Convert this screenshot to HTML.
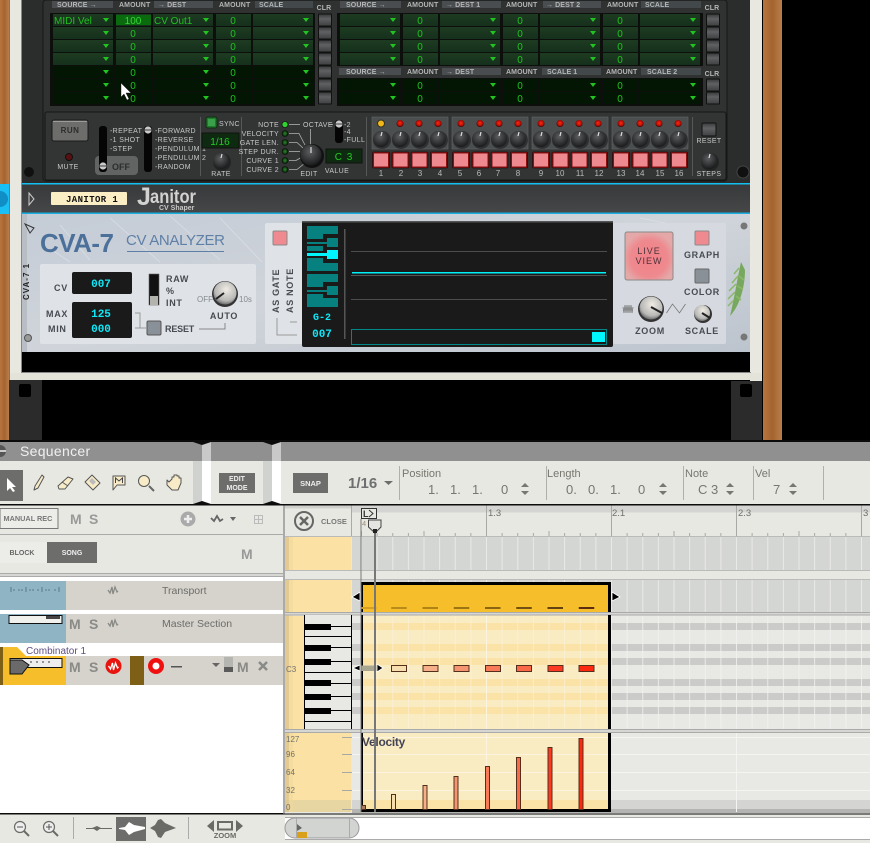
<!DOCTYPE html>
<html>
<head>
<meta charset="utf-8">
<style>
html,body{margin:0;padding:0;background:#000;width:870px;height:843px;overflow:hidden}
svg{display:block;font-family:"Liberation Sans",sans-serif}
.l{font-size:7px;font-weight:bold;fill:#b4b6b6;letter-spacing:.1px}
.n{font-size:10px;fill:#1fc41f;text-anchor:middle}
.g{font-size:10px;fill:#20c020}
.c{text-anchor:middle}
.d{font-size:9px;font-weight:bold;fill:#474c52;letter-spacing:.7px}
.sq{font-size:11px;fill:#77776f}
.num{font-size:13px;fill:#77776f}
.M{font-size:14px;font-weight:bold;fill:#8c8c88}
.s{font-size:7px;fill:#c6c8c8;letter-spacing:.35px}
</style>
</head>
<body>
<svg width="870" height="843" viewBox="0 0 870 843" xmlns="http://www.w3.org/2000/svg">
<defs>
<linearGradient id="wood" x1="0" x2="1" y1="0" y2="0"><stop offset="0" stop-color="#b8743f"/><stop offset=".5" stop-color="#a4642f"/><stop offset="1" stop-color="#b97e4c"/></linearGradient>
<linearGradient id="btn" x1="0" x2="0" y1="0" y2="1"><stop offset="0" stop-color="#3a3c3d"/><stop offset=".4" stop-color="#5f6163"/><stop offset="1" stop-color="#3f4142"/></linearGradient>
<radialGradient id="kn" cx=".45" cy=".35" r=".75"><stop offset="0" stop-color="#5c5e60"/><stop offset=".8" stop-color="#1f2021"/><stop offset="1" stop-color="#0b0b0b"/></radialGradient>
<radialGradient id="kw" cx=".55" cy=".35" r=".7"><stop offset="0" stop-color="#f0ece4"/><stop offset=".7" stop-color="#b8b8b6"/><stop offset="1" stop-color="#56565a"/></radialGradient>
<radialGradient id="led" cx=".5" cy=".45" r=".55"><stop offset="0" stop-color="#ff2a10"/><stop offset=".7" stop-color="#b00c04"/><stop offset="1" stop-color="#200"/></radialGradient>
<radialGradient id="gled" cx=".5" cy=".5" r=".55"><stop offset="0" stop-color="#2a8a2a"/><stop offset="1" stop-color="#071a07"/></radialGradient>
<radialGradient id="live" cx=".5" cy=".55" r=".55"><stop offset="0" stop-color="#f28088"/><stop offset=".7" stop-color="#ee8a8f"/><stop offset="1" stop-color="#e4a8a8"/></radialGradient>
<linearGradient id="fold" x1="0" x2="0" y1="0" y2="1"><stop offset="0" stop-color="#38393a"/><stop offset="1" stop-color="#464748"/></linearGradient>
<linearGradient id="cva" x1="0" x2="1" y1="0" y2="1"><stop offset="0" stop-color="#c4ccd6"/><stop offset=".5" stop-color="#d0d4da"/><stop offset="1" stop-color="#bcc4ce"/></linearGradient>
<linearGradient id="rowhi" x1="0" x2="0" y1="0" y2="1"><stop offset="0" stop-color="#1e3c22"/><stop offset="1" stop-color="#15301c"/></linearGradient>
<pattern id="rowsA" patternUnits="userSpaceOnUse" width="10" height="13" y="14"><rect width="10" height="12" fill="url(#rowhi)"/></pattern>
<pattern id="rowsB" patternUnits="userSpaceOnUse" width="10" height="13" y="14"><rect width="10" height="12" fill="#031503"/></pattern>
<pattern id="v16" patternUnits="userSpaceOnUse" width="15.625" height="10" x="361"><rect width="1" height="10" fill="#f2f2f0"/></pattern>
<pattern id="v16y" patternUnits="userSpaceOnUse" width="15.625" height="10" x="361"><rect width="1" height="10" fill="#fbf2d8"/></pattern>
<pattern id="ticks" patternUnits="userSpaceOnUse" width="15.625" height="10" x="361"><rect width="1" height="10" fill="#a8a8a4"/></pattern>
<pattern id="ticksM" patternUnits="userSpaceOnUse" width="62.5" height="10" x="361"><rect width="1" height="10" fill="#a8a8a4"/></pattern>
<polygon id="tri" points="-3,-2 3,-2 0,2" fill="#22c422"/>
<g id="clr"><rect x="-7" y="-6.500" width="14" height="13" rx="1" fill="#111"/><rect x="-6" y="-5.500" width="12" height="11" fill="url(#btn)"/></g>
<g id="k"><circle r="9" fill="#111" opacity=".5" cx="1" cy="1"/><circle r="8" fill="url(#kn)"/><line x1="1" y1="-7" x2="0" y2="-3" stroke="#ddd" stroke-width="1.2"/></g>
<g id="rled"><circle r="3.5" fill="url(#led)"/></g>
<g id="pad"><rect width="17" height="16" rx="1" fill="#8c0f10" stroke="#1a0505" stroke-width=".6"/><rect x="1.5" y="1.5" width="14" height="13" fill="#ee8990"/></g>
<g id="gl"><circle r="3" fill="url(#gled)" stroke="#0a0d0a" stroke-width=".6"/></g>
<g id="slotk"><circle r="3.6" fill="#c9c9c9"/><rect x="-3.6" y="-.6" width="7.2" height="1.2" fill="#555"/></g>
<g id="sp"><polygon points="-4,-2 0,-6 4,-2" fill="#77776f"/><polygon points="-4,2 0,6 4,2" fill="#77776f"/></g>
</defs>

<!-- background -->
<rect width="870" height="843" fill="#000"/>
<rect x="0" y="0" width="9" height="440" fill="url(#wood)"/>
<rect x="763" y="0" width="19" height="440" fill="url(#wood)"/>
<rect x="9" y="0" width="1" height="381" fill="#777"/>
<rect x="10" y="0" width="11" height="381" fill="#e9e8e0"/>
<rect x="750" y="0" width="12" height="381" fill="#e9e8e0"/>
<rect x="21" y="0" width="1" height="373" fill="#888"/>
<rect x="10" y="373" width="752" height="7" fill="#e4e3da"/>
<rect x="21" y="372" width="730" height="1" fill="#888"/>
<rect x="9" y="380" width="33" height="60" fill="#2b2b2b"/>
<rect x="19" y="384" width="12" height="13" rx="2" fill="#000"/>
<rect x="731" y="381" width="31" height="59" fill="#2b2b2b"/>
<rect x="740" y="384" width="12" height="13" rx="2" fill="#000"/>
<rect x="0" y="184" width="9" height="30" fill="#19bff5"/>
<circle cx="0" cy="199" r="8" fill="#108fc6"/>

<!-- Redrum-like device -->
<rect x="22" y="0" width="728" height="184" fill="#2b2d2d"/>
<rect x="43" y="0" width="684" height="181" rx="3" fill="#303232" stroke="#161717"/>
<circle cx="29" cy="172" r="5" fill="#101010"/><circle cx="743" cy="172" r="6" fill="#101010" stroke="#444"/>

<!-- headers left -->
<rect x="52" y="1" width="61" height="7" fill="#4a4d4f"/>
<rect x="154" y="1" width="59" height="7" fill="#4a4d4f"/>
<rect x="255" y="1" width="58" height="7" fill="#43494a"/>
<text class="l" x="57" y="7">SOURCE →</text>
<text class="l" x="119" y="7">AMOUNT</text>
<text class="l" x="158" y="7">→ DEST</text>
<text class="l" x="219" y="7">AMOUNT</text>
<text class="l" x="259" y="7">SCALE</text>
<text class="l c" x="324" y="10">CLR</text>

<!-- table left -->
<rect x="50" y="13" width="265" height="93" fill="#0d0f0d"/>
<g fill="url(#rowsA)">
<rect x="53" y="14" width="60" height="52"/><rect x="116" y="14" width="35" height="52"/><rect x="153" y="14" width="60" height="52"/><rect x="216" y="14" width="35" height="52"/><rect x="253" y="14" width="60" height="52"/>
</g>
<g fill="url(#rowsB)">
<rect x="53" y="66" width="60" height="39"/><rect x="116" y="66" width="35" height="39"/><rect x="153" y="66" width="60" height="39"/><rect x="216" y="66" width="35" height="39"/><rect x="253" y="66" width="60" height="39"/>
</g>
<rect x="116" y="15" width="35" height="10" fill="#0a6a0e"/>
<text class="g" x="54" y="24">MIDI Vel</text>
<text class="g" x="154" y="24">CV Out1</text>
<text class="n" x="133" y="24" style="fill:#39d339">100</text>
<text class="n" x="133" y="37">0</text><text class="n" x="133" y="50">0</text><text class="n" x="133" y="63">0</text><text class="n" x="133" y="76">0</text><text class="n" x="133" y="89">0</text><text class="n" x="133" y="102">0</text>
<text class="n" x="233" y="24">0</text><text class="n" x="233" y="37">0</text><text class="n" x="233" y="50">0</text><text class="n" x="233" y="63">0</text><text class="n" x="233" y="76">0</text><text class="n" x="233" y="89">0</text><text class="n" x="233" y="102">0</text>
<g>
<use href="#tri" x="106" y="20"/><use href="#tri" x="106" y="33"/><use href="#tri" x="106" y="46"/><use href="#tri" x="106" y="59"/><use href="#tri" x="106" y="72"/><use href="#tri" x="106" y="85"/><use href="#tri" x="106" y="98"/>
<use href="#tri" x="206" y="20"/><use href="#tri" x="206" y="33"/><use href="#tri" x="206" y="46"/><use href="#tri" x="206" y="59"/><use href="#tri" x="206" y="72"/><use href="#tri" x="206" y="85"/><use href="#tri" x="206" y="98"/>
<use href="#tri" x="306" y="20"/><use href="#tri" x="306" y="33"/><use href="#tri" x="306" y="46"/><use href="#tri" x="306" y="59"/><use href="#tri" x="306" y="72"/><use href="#tri" x="306" y="85"/><use href="#tri" x="306" y="98"/>
</g>
<use href="#clr" x="325" y="20"/><use href="#clr" x="325" y="33"/><use href="#clr" x="325" y="46"/><use href="#clr" x="325" y="59"/><use href="#clr" x="325" y="72"/><use href="#clr" x="325" y="85"/><use href="#clr" x="325" y="98"/>

<!-- headers right -->
<rect x="340" y="1" width="61" height="7" fill="#4a4d4f"/>
<rect x="442" y="1" width="59" height="7" fill="#4a4d4f"/>
<rect x="543" y="1" width="58" height="7" fill="#4a4d4f"/>
<rect x="641" y="1" width="60" height="7" fill="#43494a"/>
<text class="l" x="346" y="7">SOURCE →</text>
<text class="l" x="407" y="7">AMOUNT</text>
<text class="l" x="446" y="7">→ DEST 1</text>
<text class="l" x="506" y="7">AMOUNT</text>
<text class="l" x="546" y="7">→ DEST 2</text>
<text class="l" x="607" y="7">AMOUNT</text>
<text class="l" x="645" y="7">SCALE</text>
<text class="l c" x="712" y="10">CLR</text>
<rect x="339" y="68" width="62" height="7" fill="#4a4d4f"/>
<rect x="442" y="68" width="59" height="7" fill="#4a4d4f"/>
<rect x="542" y="68" width="59" height="7" fill="#43494a"/>
<rect x="641" y="68" width="60" height="7" fill="#43494a"/>
<text class="l" x="346" y="74">SOURCE →</text>
<text class="l" x="407" y="74">AMOUNT</text>
<text class="l" x="446" y="74">→ DEST</text>
<text class="l" x="506" y="74">AMOUNT</text>
<text class="l" x="547" y="74">SCALE 1</text>
<text class="l" x="606" y="74">AMOUNT</text>
<text class="l" x="647" y="74">SCALE 2</text>
<text class="l c" x="712" y="76">CLR</text>

<!-- tables right -->
<rect x="337" y="13" width="366" height="53" fill="#0d0f0d"/>
<rect x="337" y="78" width="366" height="28" fill="#0d0f0d"/>
<g fill="url(#rowsA)">
<rect x="340" y="14" width="60" height="52"/><rect x="403" y="14" width="35" height="52"/><rect x="440" y="14" width="60" height="52"/><rect x="503" y="14" width="35" height="52"/><rect x="540" y="14" width="60" height="52"/><rect x="603" y="14" width="35" height="52"/><rect x="640" y="14" width="60" height="52"/>
</g>
<g fill="url(#rowsB)">
<rect x="340" y="79" width="60" height="26"/><rect x="403" y="79" width="35" height="26"/><rect x="440" y="79" width="60" height="26"/><rect x="503" y="79" width="35" height="26"/><rect x="540" y="79" width="60" height="26"/><rect x="603" y="79" width="35" height="26"/><rect x="640" y="79" width="60" height="26"/>
</g>
<text class="n" x="420" y="24">0</text><text class="n" x="420" y="37">0</text><text class="n" x="420" y="50">0</text><text class="n" x="420" y="63">0</text><text class="n" x="420" y="89">0</text><text class="n" x="420" y="102">0</text>
<text class="n" x="520" y="24">0</text><text class="n" x="520" y="37">0</text><text class="n" x="520" y="50">0</text><text class="n" x="520" y="63">0</text><text class="n" x="520" y="89">0</text><text class="n" x="520" y="102">0</text>
<text class="n" x="620" y="24">0</text><text class="n" x="620" y="37">0</text><text class="n" x="620" y="50">0</text><text class="n" x="620" y="63">0</text><text class="n" x="620" y="89">0</text><text class="n" x="620" y="102">0</text>
<use href="#tri" x="393" y="20"/><use href="#tri" x="393" y="33"/><use href="#tri" x="393" y="46"/><use href="#tri" x="393" y="59"/><use href="#tri" x="393" y="85"/><use href="#tri" x="393" y="98"/>
<use href="#tri" x="493" y="20"/><use href="#tri" x="493" y="33"/><use href="#tri" x="493" y="46"/><use href="#tri" x="493" y="59"/><use href="#tri" x="493" y="85"/><use href="#tri" x="493" y="98"/>
<use href="#tri" x="593" y="20"/><use href="#tri" x="593" y="33"/><use href="#tri" x="593" y="46"/><use href="#tri" x="593" y="59"/><use href="#tri" x="593" y="85"/><use href="#tri" x="593" y="98"/>
<use href="#tri" x="693" y="20"/><use href="#tri" x="693" y="33"/><use href="#tri" x="693" y="46"/><use href="#tri" x="693" y="59"/><use href="#tri" x="693" y="85"/><use href="#tri" x="693" y="98"/>
<use href="#clr" x="713" y="20"/><use href="#clr" x="713" y="33"/><use href="#clr" x="713" y="46"/><use href="#clr" x="713" y="59"/><use href="#clr" x="713" y="85"/><use href="#clr" x="713" y="98"/>

<!-- cursor -->
<polygon points="121,83 121,97 124,94 127,100 129,99 126,93 131,93" fill="#fff" stroke="#111" stroke-width=".4"/>

<!-- lower panel -->
<rect x="45" y="112" width="681" height="68" rx="2" fill="#333535" stroke="#151616"/>
<rect x="52" y="120" width="36" height="21" rx="2" fill="#6d6d6b" stroke="#1a1a1a"/>
<rect x="53" y="121" width="34" height="1" fill="#9c9c9a"/>
<text x="70" y="133" class="c" style="font-size:8px;font-weight:bold;fill:#2d2d2d;letter-spacing:.5px">RUN</text>
<circle cx="69" cy="157" r="3.5" fill="#5a1010" stroke="#111"/>
<text class="s c" x="68" y="169">MUTE</text>
<rect x="95" y="156" width="43" height="19" rx="4" fill="#626363"/>
<rect x="99" y="126" width="8" height="46" rx="3" fill="#050505"/>
<use href="#slotk" x="103" y="166"/>
<text style="font-size:9px;font-weight:bold;fill:#2c2e2e" x="112" y="170">OFF</text>
<text class="s" x="110" y="133">-REPEAT</text>
<text class="s" x="110" y="142">-1 SHOT</text>
<text class="s" x="110" y="151">-STEP</text>
<rect x="144" y="126" width="8" height="46" rx="3" fill="#050505"/>
<use href="#slotk" x="148" y="130"/>
<text class="s" x="155" y="133">-FORWARD</text>
<text class="s" x="155" y="142">-REVERSE</text>
<text class="s" x="155" y="151">-PENDULUM 1</text>
<text class="s" x="155" y="160">-PENDULUM 2</text>
<text class="s" x="155" y="169">-RANDOM</text>
<rect x="200" y="117" width="1" height="59" fill="#565858"/>
<rect x="241" y="117" width="1" height="59" fill="#565858"/>
<rect x="366" y="117" width="1" height="59" fill="#565858"/>
<rect x="692" y="117" width="1" height="59" fill="#565858"/>
<rect x="206" y="117" width="11" height="11" rx="2" fill="#1f7a2c" stroke="#0f2a12"/>
<rect x="208" y="119" width="7" height="7" fill="#3aa04a"/>
<text class="s" x="219" y="126">SYNC</text>
<rect x="202" y="133" width="37" height="15" fill="#0e2a10" stroke="#111"/>
<text x="220" y="145" class="c" style="font-size:10px;fill:#24cc24">1/16</text>
<use href="#k" x="221" y="161"/>
<text class="s c" x="221" y="176">RATE</text>
<g text-anchor="end">
<text class="s" x="279" y="127">NOTE</text><text class="s" x="279" y="136">VELOCITY</text><text class="s" x="279" y="145">GATE LEN.</text><text class="s" x="279" y="154">STEP DUR.</text><text class="s" x="279" y="163">CURVE 1</text><text class="s" x="279" y="172">CURVE 2</text>
</g>
<circle cx="285" cy="124.5" r="3" fill="#30d030" stroke="#0a0d0a" stroke-width=".6"/>
<use href="#gl" x="285" y="133.5"/><use href="#gl" x="285" y="142.5"/><use href="#gl" x="285" y="151.5"/><use href="#gl" x="285" y="160.5"/><use href="#gl" x="285" y="169.5"/>
<g stroke="#b0b2b2" fill="none" stroke-width=".8">
<path d="M289 124.5H300"/><path d="M289 133.5H299L305 145"/><path d="M289 142.5H297L303 148"/><path d="M289 151.5H300"/><path d="M289 160.5H296L302 157"/><path d="M289 169.5H297L305 163"/>
<path d="M329 124.5H333"/><path d="M310.500 129V147"/>
</g>
<text class="s" x="303" y="127">OCTAVE</text>
<circle cx="312" cy="156" r="12" fill="#111"/><circle cx="311" cy="155" r="10.500" fill="url(#kn)"/><line x1="311" y1="147" x2="311" y2="153" stroke="#ddd" stroke-width="1.2"/>
<text class="s c" x="309" y="176">EDIT</text>
<rect x="335" y="120" width="8" height="23" rx="3" fill="#050505"/><use href="#slotk" x="339" y="124"/>
<text class="s" x="344" y="127">-2</text><text class="s" x="344" y="134">-4</text><text class="s" x="344" y="142">-FULL</text>
<rect x="326" y="149" width="36" height="14" fill="#0e2a10" stroke="#111"/>
<text x="344" y="160" class="c" style="font-size:10px;fill:#24cc24;letter-spacing:1px">C 3</text>
<text class="s c" x="337" y="173">VALUE</text>

<!-- step groups -->
<rect x="372" y="117" width="76" height="32" fill="#4c4f50" stroke="#636566" stroke-width=".6"/>
<rect x="452" y="117" width="76" height="32" fill="#4c4f50" stroke="#636566" stroke-width=".6"/>
<rect x="532" y="117" width="76" height="32" fill="#4c4f50" stroke="#636566" stroke-width=".6"/>
<rect x="612" y="117" width="76" height="32" fill="#4c4f50" stroke="#636566" stroke-width=".6"/>
<circle cx="381" cy="123.500" r="3.500" fill="#f2b818" stroke="#332"/>
<use href="#rled" x="400" y="123.500"/><use href="#rled" x="419" y="123.500"/><use href="#rled" x="438" y="123.500"/>
<use href="#rled" x="461" y="123.500"/><use href="#rled" x="480" y="123.500"/><use href="#rled" x="499" y="123.500"/><use href="#rled" x="518" y="123.500"/>
<use href="#rled" x="541" y="123.500"/><use href="#rled" x="560" y="123.500"/><use href="#rled" x="579" y="123.500"/><use href="#rled" x="598" y="123.500"/>
<use href="#rled" x="621" y="123.500"/><use href="#rled" x="640" y="123.500"/><use href="#rled" x="659" y="123.500"/><use href="#rled" x="678" y="123.500"/>
<use href="#k" x="381" y="139"/><use href="#k" x="400" y="139"/><use href="#k" x="419" y="139"/><use href="#k" x="438" y="139"/>
<use href="#k" x="461" y="139"/><use href="#k" x="480" y="139"/><use href="#k" x="499" y="139"/><use href="#k" x="518" y="139"/>
<use href="#k" x="541" y="139"/><use href="#k" x="560" y="139"/><use href="#k" x="579" y="139"/><use href="#k" x="598" y="139"/>
<use href="#k" x="621" y="139"/><use href="#k" x="640" y="139"/><use href="#k" x="659" y="139"/><use href="#k" x="678" y="139"/>
<use href="#pad" x="372.500" y="152"/><use href="#pad" x="392" y="152"/><use href="#pad" x="411" y="152"/><use href="#pad" x="430.500" y="152"/>
<use href="#pad" x="452.500" y="152"/><use href="#pad" x="472" y="152"/><use href="#pad" x="491" y="152"/><use href="#pad" x="510.500" y="152"/>
<use href="#pad" x="532.500" y="152"/><use href="#pad" x="552" y="152"/><use href="#pad" x="571" y="152"/><use href="#pad" x="590.500" y="152"/>
<use href="#pad" x="612.500" y="152"/><use href="#pad" x="632" y="152"/><use href="#pad" x="651" y="152"/><use href="#pad" x="670.500" y="152"/>
<g style="font-size:8px" fill="#b8baba" text-anchor="middle">
<text x="381" y="176">1</text><text x="401" y="176">2</text><text x="420" y="176">3</text><text x="440" y="176">4</text><text x="460" y="176">5</text><text x="479" y="176">6</text><text x="498" y="176">7</text><text x="518" y="176">8</text><text x="541" y="176">9</text><text x="560" y="176">10</text><text x="580" y="176">11</text><text x="599" y="176">12</text><text x="621" y="176">13</text><text x="640" y="176">14</text><text x="660" y="176">15</text><text x="679" y="176">16</text>
</g>
<rect x="702" y="123" width="14" height="13" rx="1" fill="url(#btn)" stroke="#111"/>
<text class="s c" x="709" y="143">RESET</text>
<use href="#k" x="709" y="161"/>
<text class="s c" x="709" y="176">STEPS</text>

<!-- folded Janitor -->
<rect x="22" y="183" width="728" height="1.500" fill="#12bff0"/>
<rect x="22" y="184.500" width="728" height="28.500" fill="url(#fold)"/>
<rect x="22" y="212.500" width="728" height="1.500" fill="#18aee0"/>
<polygon points="29,193 34,199 29,205" fill="none" stroke="#ccc"/>
<rect x="51" y="192" width="76" height="13" rx="1" fill="#fbeec4"/>
<text x="66" y="202" style="font-family:'Liberation Mono',monospace;font-size:9px;font-weight:bold;fill:#111;letter-spacing:.4px">JANITOR 1</text>
<text x="137" y="205" style="font-size:25px;font-weight:bold;fill:#d2d2d0">J</text>
<text x="150" y="203" style="font-size:19px;font-weight:bold;fill:#d2d2d0" textLength="46" lengthAdjust="spacingAndGlyphs">anitor</text>
<text x="159" y="210" style="font-size:7px;font-weight:bold;fill:#c8c8c6">CV Shaper</text>

<!-- CVA-7 -->
<rect x="22" y="214" width="728" height="138" fill="url(#cva)"/>
<g stroke="#e6e9ee" stroke-width=".8" opacity=".6">
<path d="M60 225L90 260M110 218L160 262M170 216L220 260M220 218L262 262M640 218L680 226M52 250L70 262"/>
</g>
<rect x="22" y="214" width="5" height="138" fill="#b8bec4"/>
<polygon points="25,224 34,228 30,233" fill="none" stroke="#333"/>
<text transform="translate(29,300) rotate(-90)" style="font-size:8px;font-weight:bold;fill:#222;letter-spacing:1px">CVA-7 1</text>
<text x="40" y="252" style="font-size:26px;font-weight:bold;fill:#4b7099" textLength="74">CVA-7</text>
<text x="126" y="245" style="font-size:15px;fill:#5f80a6" textLength="99">CV ANALYZER</text>
<rect x="127" y="251" width="97" height="1" fill="#5f80a6"/>
<rect x="40" y="264" width="216" height="80" rx="2" fill="#dfe2e7"/>
<text class="d c" x="61" y="291">CV</text>
<rect x="72" y="272" width="60" height="22" rx="2" fill="#1a1a1a"/>
<text x="101" y="287" class="c" style="font-family:'Liberation Mono',monospace;font-size:11px;font-weight:bold;fill:#10e8f8">007</text>
<text class="d" x="46" y="317">MAX</text><text class="d" x="48" y="332">MIN</text>
<rect x="72" y="302" width="60" height="36" rx="2" fill="#1a1a1a"/>
<text x="101" y="317" class="c" style="font-family:'Liberation Mono',monospace;font-size:11px;font-weight:bold;fill:#10e8f8">125</text>
<text x="101" y="332" class="c" style="font-family:'Liberation Mono',monospace;font-size:11px;font-weight:bold;fill:#10e8f8">000</text>
<path d="M135 313H140V328M135 328H146" stroke="#999" fill="none"/>
<rect x="147" y="321" width="14" height="14" rx="1.500" fill="#8a9098" stroke="#555"/>
<text class="d" x="165" y="332" textLength="30">RESET</text>
<path d="M199 329H225V323" stroke="#888" fill="none"/>
<rect x="149" y="274" width="10" height="31" fill="#111" stroke="#666" stroke-width=".6"/>
<rect x="150" y="296" width="8" height="9" fill="#b4b4ae"/>
<text class="d" x="166" y="282">RAW</text><text class="d" x="166" y="294">%</text><text class="d" x="166" y="306">INT</text>
<circle cx="225" cy="294" r="13" fill="#333"/><circle cx="225" cy="293" r="11.500" fill="url(#kw)"/>
<line x1="224" y1="293" x2="216" y2="299" stroke="#222" stroke-width="2"/>
<text x="197" y="302" style="font-size:8px;fill:#858b92">OFF</text><text x="239" y="302" style="font-size:8px;fill:#858b92">10s</text>
<text class="d c" x="224" y="319">AUTO</text>

<rect x="265" y="223" width="40" height="121" rx="2" fill="#dfe2e7"/>
<rect x="273" y="231" width="14" height="14" rx="1" fill="#ee8a90" stroke="#8a8a8a"/>
<text transform="translate(279,313) rotate(-90)" class="d">AS GATE</text>
<text transform="translate(293,313) rotate(-90)" class="d">AS NOTE</text>
<path d="M277 318V335H297M290 322H297" stroke="#999" fill="none"/>

<rect x="302" y="221" width="311" height="126" rx="2" fill="#1a1a1a"/>
<rect x="302" y="221" width="311" height="1.500" fill="#555"/>
<g fill="#078080">
<rect x="307" y="226" width="31" height="8"/>
<rect x="307" y="263" width="31" height="8"/>
<rect x="307" y="274" width="31" height="8"/>
<rect x="307" y="298" width="31" height="9"/>
<rect x="307" y="234" width="16" height="5"/><rect x="307" y="246" width="16" height="5"/><rect x="307" y="258" width="16" height="5"/><rect x="307" y="282" width="16" height="5"/><rect x="307" y="294" width="16" height="5"/>
<rect x="327" y="238" width="11" height="9"/><rect x="327" y="286" width="11" height="9"/>
<rect x="307" y="242" width="20" height="2"/><rect x="307" y="290" width="20" height="2"/>
</g>
<rect x="327" y="250" width="11" height="9" fill="#00f6ff"/><rect x="307" y="253" width="20" height="3" fill="#00f6ff"/>
<text x="322" y="320" class="c" style="font-family:'Liberation Mono',monospace;font-size:10px;font-weight:bold;fill:#10e8f8">G-2</text>
<text x="322" y="337" class="c" style="font-family:'Liberation Mono',monospace;font-size:11px;font-weight:bold;fill:#10e8f8">007</text>
<rect x="344" y="229" width="1.500" height="110" fill="#555"/>
<rect x="351" y="251" width="256" height="1" fill="#4c4c4c"/>
<rect x="351" y="275" width="256" height="1" fill="#555"/>
<rect x="351" y="299" width="256" height="1" fill="#4c4c4c"/>
<rect x="352" y="272" width="254" height="1.500" fill="#00f0f8"/>
<rect x="351.500" y="329.500" width="255" height="15" fill="none" stroke="#088"/>
<rect x="592" y="332" width="13" height="10" fill="#00f6ff"/>

<rect x="613" y="223" width="113" height="121" rx="2" fill="#d6dae0"/>
<rect x="625" y="232" width="48" height="48" rx="2" fill="url(#live)" stroke="#8a8a88"/>
<text x="649" y="254" class="c" style="font-size:9px;fill:#4a3338;letter-spacing:1px">LIVE</text>
<text x="649" y="264" class="c" style="font-size:9px;fill:#4a3338;letter-spacing:1px">VIEW</text>
<rect x="695" y="231" width="14" height="14" rx="1" fill="#ee8a90" stroke="#8a8a8a"/>
<text class="d c" x="702" y="258">GRAPH</text>
<rect x="695" y="269" width="14" height="14" rx="1" fill="#8a9098" stroke="#666"/>
<text class="d c" x="702" y="295">COLOR</text>
<circle cx="651" cy="309" r="13" fill="#333"/><circle cx="651" cy="308" r="11.500" fill="url(#kw)"/>
<line x1="651" y1="307" x2="662" y2="313" stroke="#222" stroke-width="2"/>
<path d="M623 307l1 6 1-8 1 8 1-8 1 8 1-8 1 8 1-8 1 8 1-6" stroke="#777" fill="none" stroke-width=".8"/>
<path d="M667 313l6-9 7 9 6-9" stroke="#777" fill="none" stroke-width=".8" transform="translate(-.500,0)"/>
<text class="d c" x="650" y="334">ZOOM</text>
<circle cx="703" cy="314" r="9" fill="#333"/><circle cx="702" cy="313" r="8" fill="url(#kw)"/>
<line x1="702" y1="313" x2="710" y2="318" stroke="#222" stroke-width="2"/>
<text class="d c" x="702" y="334">SCALE</text>
<path d="M741 262C737 280 734 300 730 316C738 308 745 290 745 270Z" fill="#78a85e"/>
<path d="M739 268l-5 6M738 276l-6 7M736 284l-7 7M735 292l-7 7M734 300l-6 6M739 276l5 4M737 286l6 3M736 296l5 4" stroke="#8cb86a" stroke-width="1.500"/>
<circle cx="744" cy="226" r="3.500" fill="#777"/><circle cx="744" cy="337" r="3.500" fill="#777"/>
<circle cx="28" cy="338" r="3.500" fill="#999" stroke="#555"/>

<!-- SEQUENCER -->
<rect x="0" y="440" width="870" height="2" fill="#0b0b0b"/>
<rect x="0" y="442" width="870" height="19" fill="#8f908f"/>
<circle cx="0" cy="451" r="6" fill="#555"/><rect x="0" y="450" width="6" height="2" fill="#ccc"/>
<text x="20" y="456" style="font-size:14px;fill:#f0f0f0;letter-spacing:.3px">Sequencer</text>
<rect x="0" y="461" width="870" height="43" fill="#e8e8e3"/>
<rect x="0" y="504" width="870" height="1.500" fill="#0c0c0c"/>
<rect x="193" y="461" width="9" height="43" fill="#d0d2d0"/><rect x="202" y="461" width="9" height="43" fill="#fff"/>
<rect x="263" y="461" width="9" height="43" fill="#d0d2d0"/><rect x="272" y="461" width="9" height="43" fill="#fff"/>
<rect x="202" y="442" width="9" height="19" fill="#c8c9c8"/><rect x="272" y="442" width="9" height="19" fill="#c8c9c8"/>
<polygon points="193,442 211,442 202,445" fill="#0c0c0c"/><polygon points="263,442 281,442 272,445" fill="#0c0c0c"/>
<polygon points="193,504 211,504 202,501" fill="#0c0c0c"/><polygon points="263,504 281,504 272,501" fill="#0c0c0c"/>

<!-- tools -->
<rect x="0" y="470" width="23" height="31" fill="#6d6e6c"/>
<polygon points="7,478 7,491 10,488 13,492 15,491 12,487 16,487" fill="#fff"/>
<g fill="#f8ecc8" stroke="#555" stroke-width="1" stroke-linejoin="round">
<path d="M42 475L44 477L38 488L34 490L35 486Z"/>
<path d="M58 486L68 477L73 479L65 489L59 489Z"/>
<path d="M92 475L100 483L93 490L85 482Z"/>
<path d="M113 476H125V485H117L113 490Z"/>
<circle cx="144" cy="481" r="5.500"/>
<path d="M167 480V485L172 490H178L181 483V478L179 478V476H177V475H174V477H172V479L169 482Z"/>
</g>
<path d="M149 486L154 491" stroke="#666" stroke-width="2"/>
<path d="M62 482L68 486" stroke="#555" fill="none"/>
<path d="M115.500 483V478L119 481L122.500 478V483" stroke="#444" fill="none" stroke-width="1"/>
<path d="M89 481L92 478L96 482L93 485Z" fill="#bbb" stroke="none"/>
<rect x="219" y="473" width="36" height="20" fill="#6d6e6c"/>
<text x="237" y="481" class="c" style="font-size:7px;font-weight:bold;fill:#eee">EDIT</text>
<text x="237" y="490" class="c" style="font-size:7px;font-weight:bold;fill:#eee">MODE</text>
<rect x="293" y="473" width="35" height="20" fill="#6d6e6c"/>
<text x="310.500" y="486" class="c" style="font-size:7.500px;font-weight:bold;fill:#eee">SNAP</text>
<text x="348" y="488" style="font-size:15px;font-weight:bold;fill:#6d706f">1/16</text>
<polygon points="384,481 393,481 388.500,485" fill="#6d6e6c"/>
<g fill="#b0b0aa">
<rect x="399" y="466" width="1" height="34"/><rect x="546" y="466" width="1" height="34"/><rect x="683" y="466" width="1" height="34"/><rect x="753" y="466" width="1" height="34"/><rect x="823" y="466" width="1" height="34"/>
</g>
<text class="sq" x="402" y="477">Position</text>
<text class="sq" x="547" y="477">Length</text>
<text class="sq" x="685" y="477">Note</text>
<text class="sq" x="755" y="477">Vel</text>
<text class="num" x="428" y="494">1.</text><text class="num" x="450" y="494">1.</text><text class="num" x="472" y="494">1.</text><text class="num" x="501" y="494">0</text>
<use href="#sp" x="525" y="489"/>
<text class="num" x="566" y="494">0.</text><text class="num" x="588" y="494">0.</text><text class="num" x="610" y="494">1.</text><text class="num" x="638" y="494">0</text>
<use href="#sp" x="663" y="489"/>
<text class="num" x="698" y="494">C 3</text>
<use href="#sp" x="730" y="489"/>
<text class="num" x="773" y="494">7</text>
<use href="#sp" x="793" y="489"/>

<!-- track list -->
<rect x="0" y="505.500" width="284" height="308" fill="#fff"/>
<rect x="0" y="505.500" width="284" height="68" fill="#e8e8e3"/>
<rect x="0" y="508.500" width="58" height="20" fill="#ecece8" stroke="#777"/>
<text x="28" y="521" class="c" style="font-size:7.300px;font-weight:bold;fill:#777">MANUAL REC</text>
<text class="M" x="70" y="524" style="fill:#999">M</text><text class="M" x="89" y="524" style="fill:#999">S</text>
<circle cx="188" cy="519" r="7.500" fill="#aaa"/><path d="M188 515V523M184 519H192" stroke="#eee" stroke-width="2.500"/>
<path d="M211 518l3 3 3-5 3 5 3-2" stroke="#666" fill="none" stroke-width="1.800"/>
<polygon points="230,517 236,517 233,521" fill="#666"/>
<path d="M254.500 515.500h8v8h-8zM258.500 515.500v8M254.500 519.500h8" stroke="#bbb" fill="none"/>
<rect x="0" y="534" width="284" height="1" fill="#aaa"/>
<rect x="0" y="542" width="47" height="21" fill="#ecece8"/><rect x="47" y="542" width="50" height="21" fill="#6d6e6c"/>
<text x="22" y="555" class="c" style="font-size:7px;font-weight:bold;fill:#666">BLOCK</text>
<text x="72" y="555" class="c" style="font-size:7px;font-weight:bold;fill:#eee">SONG</text>
<text class="M" x="241" y="559" style="fill:#999">M</text>
<rect x="0" y="573" width="284" height="1" fill="#aaa"/><rect x="0" y="574" width="284" height="2" fill="#d6d6d2"/><rect x="0" y="576" width="284" height="1" fill="#aaa"/>

<rect x="0" y="581" width="66" height="29" fill="#8fb5c4"/><rect x="66" y="581" width="218" height="29" fill="#d6d3cc"/>
<path d="M11 587v5M14 589v2M19 589v2M22 589v2M26 587v5M30 589v2M33 589v2M38 589v2M42 587v5M46 589v2M49 589v2M55 589v2M59 587v5" stroke="#5a7888"/>
<path d="M108 590l2 3 2-6 1 7 2-7 2 5 1-1" stroke="#8a8a86" fill="none" stroke-width="1.300"/>
<text x="162" y="594" style="font-size:10.500px;fill:#6c6c68">Transport</text>
<rect x="0" y="614" width="66" height="29" fill="#8fb5c4"/><rect x="66" y="614" width="218" height="29" fill="#d6d3cc"/>
<rect x="9" y="615.500" width="53" height="8" fill="#f0f0ec" stroke="#111"/>
<rect x="46" y="616" width="14" height="3" fill="#444"/>
<text class="M" x="69" y="629" style="fill:#8a8a86">M</text><text class="M" x="89" y="629" style="fill:#8a8a86">S</text>
<path d="M108 623l2 3 2-6 1 7 2-7 2 5 1-1" stroke="#8a8a86" fill="none" stroke-width="1.300"/>
<text x="162" y="627" style="font-size:10.500px;fill:#6c6c68">Master Section</text>
<polygon points="3,647 17,647 26,656 66,656 66,685 3,685" fill="#f6be2a"/>
<rect x="0" y="647" width="3" height="38" fill="#7d5f16"/>
<rect x="66" y="656" width="218" height="29" fill="#d6d3cc"/>
<text x="26" y="654" style="font-size:10px;fill:#5e4d80">Combinator 1</text>
<rect x="10" y="658.500" width="52" height="9" fill="#eee" stroke="#111"/>
<polygon points="10,660 22,660 29,665 22,674 10,674" fill="#6a6a6a" stroke="#111"/>
<circle cx="31" cy="662" r="1" fill="#777"/><circle cx="37" cy="662" r="1" fill="#777"/><circle cx="43" cy="662" r="1" fill="#777"/><circle cx="49" cy="662" r="1" fill="#777"/>
<text class="M" x="69" y="672" style="fill:#8a8a86">M</text><text class="M" x="89" y="672" style="fill:#8a8a86">S</text>
<circle cx="113.500" cy="666" r="8" fill="#e8150f"/><path d="M108.500 666l2 3 2-6 1 7 2-7 2 5 1-1" stroke="#fff" fill="none" stroke-width="1.300"/>
<rect x="130" y="656" width="14" height="29" fill="#7d5f16"/>
<circle cx="156" cy="666" r="8" fill="#f01010"/><circle cx="156" cy="666" r="3.500" fill="#fff"/>
<rect x="171" y="666" width="11" height="1.500" fill="#555"/>
<polygon points="212,663 220,663 216,667" fill="#666"/>
<rect x="224" y="657" width="9" height="15" fill="#b5b5b2"/><rect x="224" y="667" width="9" height="5" fill="#5a5a5a"/>
<text class="M" x="237" y="672" style="fill:#8a8a86">M</text>
<path d="M259 662L267 670M267 662L259 670" stroke="#8a8a86" stroke-width="2.500"/>

<!-- bottom bar -->
<rect x="0" y="813" width="870" height="30" fill="#e8e8e3"/>
<rect x="0" y="813" width="870" height="1.500" fill="#0c0c0c"/>
<g stroke="#6a6a66" fill="#eee" stroke-width="1.200">
<circle cx="20" cy="827" r="5.500"/><circle cx="49" cy="827" r="5.500"/>
</g>
<path d="M17 827H23M46 827H52M49 824V830" stroke="#555"/>
<path d="M24 831L29 836M53 831L58 836" stroke="#6a6a66" stroke-width="2"/>
<rect x="73" y="817" width="1" height="22" fill="#aaa"/><rect x="188" y="817" width="1" height="22" fill="#aaa"/>
<path d="M86 828.500H112" stroke="#6a6a66"/><path d="M92 828L97 826L101 828L97 831Z" fill="#6a6a66"/>
<rect x="116" y="817" width="30" height="24" fill="#6d6e6c"/>
<path d="M119 828L125 827L129 822L134 825L145 827V829L134 832L129 835L125 830L119 829Z" fill="#fff"/>
<path d="M150 828L155 825L158 820L161 819L165 823L176 828L165 832L161 838L158 837L155 831Z" fill="#6a6a66"/>
<polygon points="214,820 214,832 207,826" fill="#6a6a66"/>
<polygon points="236,820 243,826 236,832" fill="#6a6a66"/>
<rect x="218" y="822" width="14" height="7.500" fill="none" stroke="#6a6a66" stroke-width="2"/>
<text x="225" y="838" class="c" style="font-size:7.500px;font-weight:bold;fill:#6a6a66">ZOOM</text>
<rect x="285" y="817" width="585" height="23" fill="#fff"/>
<rect x="285" y="817" width="585" height="1" fill="#aaa"/><rect x="285" y="839" width="585" height="1" fill="#aaa"/>
<rect x="285" y="818" width="74" height="20" rx="10" fill="#d2d4d2" stroke="#999"/>
<rect x="296" y="818" width="1" height="20" fill="#aaa"/><rect x="349" y="818" width="1" height="20" fill="#aaa"/>
<rect x="297" y="832" width="10" height="6" fill="#d9a01c"/>
<polygon points="297,824 302,828 297,831" fill="#666"/>

<!-- sequencer lanes -->
<rect x="283" y="505.500" width="2" height="308" fill="#aaa"/>
<rect x="285" y="505.500" width="585" height="308" fill="#e8e8e3"/>
<rect x="352" y="505.500" width="518" height="7" fill="#d4d4d2"/>
<rect x="285" y="505.500" width="66" height="3" fill="#cfcfcc"/>
<rect x="351" y="505.500" width="1" height="31" fill="#aaa"/>
<!-- ruler -->
<rect x="352" y="533" width="518" height="3" fill="url(#ticks)"/>
<rect x="352" y="531" width="518" height="5" fill="url(#ticksM)"/>
<rect x="285" y="536" width="585" height="1" fill="#bbb"/>
<rect x="486" y="505.500" width="1" height="31" fill="#a8a8a4"/><rect x="611" y="505.500" width="1" height="31" fill="#a8a8a4"/><rect x="736" y="505.500" width="1" height="31" fill="#a8a8a4"/><rect x="861" y="505.500" width="1" height="31" fill="#a8a8a4"/>
<text x="488" y="516" style="font-size:9.500px;fill:#70706c">1.3</text>
<text x="612" y="516" style="font-size:9.500px;fill:#70706c">2.1</text>
<text x="738" y="516" style="font-size:9.500px;fill:#70706c">2.3</text>
<text x="863" y="516" style="font-size:9.500px;fill:#70706c">3</text>
<circle cx="304" cy="521" r="9" fill="#e8e8e3" stroke="#666" stroke-width="2"/>
<path d="M300 517L308 525M308 517L300 525" stroke="#666" stroke-width="2.500"/>
<text x="321" y="524" style="font-size:7.500px;font-weight:bold;fill:#777">CLOSE</text>

<!-- left yellow -->
<rect x="285" y="537" width="66" height="33" fill="#fbe2a4"/>
<rect x="285" y="580" width="66" height="32" fill="#fbe2a4"/>
<rect x="285" y="616" width="66" height="113" fill="#fbe2a4"/>
<rect x="285" y="733" width="66" height="78" fill="#fbe2a4"/>
<rect x="285" y="800" width="66" height="12" fill="#e7d5a2"/>
<rect x="285" y="537" width="4" height="275" fill="#d9c18a" opacity=".7"/>
<rect x="289" y="537" width="4" height="275" fill="#f0d89c" opacity=".6"/>
<rect x="285" y="570" width="585" height="1" fill="#bbb"/><rect x="285" y="579" width="585" height="1" fill="#bbb"/>
<rect x="285" y="571" width="585" height="8" fill="#e8e8e3"/>

<!-- lane 1 -->
<rect x="352" y="537" width="518" height="33" fill="#d4d6d4"/>
<rect x="352" y="537" width="518" height="33" fill="url(#v16)" opacity=".7"/>
<!-- transport lane -->
<rect x="352" y="580" width="518" height="32" fill="#d4d6d4"/>
<rect x="352" y="580" width="518" height="32" fill="url(#v16)" opacity=".7"/>
<!-- piano lane -->
<rect x="352" y="615" width="518" height="114" fill="#e8e8e4"/>
<g fill="#cbcbca">
<rect x="352" y="623" width="518" height="7"/><rect x="352" y="644" width="518" height="7"/><rect x="352" y="658" width="518" height="7"/><rect x="352" y="679" width="518" height="7"/><rect x="352" y="693" width="518" height="7"/><rect x="352" y="707" width="518" height="7"/>
</g>
<rect x="352" y="615" width="518" height="114" fill="url(#v16)" opacity=".8"/>
<!-- vel lane -->
<rect x="352" y="733" width="518" height="79" fill="#e8e8e4"/>
<rect x="352" y="800" width="518" height="9" fill="#d4d4d2"/><rect x="352" y="809" width="518" height="4" fill="#b4b4b2"/>
<g fill="#f4f4f2"><rect x="352" y="737" width="518" height="1"/><rect x="352" y="754" width="518" height="1"/><rect x="352" y="772" width="518" height="1"/><rect x="352" y="790" width="518" height="1"/></g>
<rect x="736" y="733" width="1" height="79" fill="#f4f4f2"/>
<rect x="486" y="733" width="1" height="79" fill="#f4f4f2"/>

<!-- clip -->
<rect x="361" y="582" width="250" height="230" fill="#f9ebc2"/>
<rect x="361" y="582" width="250" height="30" fill="#f6be2a"/>
<g fill="#fbe2a6">
<rect x="361" y="623" width="250" height="7"/><rect x="361" y="644" width="250" height="7"/><rect x="361" y="658" width="250" height="7"/><rect x="361" y="679" width="250" height="7"/><rect x="361" y="693" width="250" height="7"/><rect x="361" y="707" width="250" height="7"/>
<rect x="361" y="800" width="250" height="9"/>
</g>
<rect x="361" y="615" width="250" height="114" fill="url(#v16y)" opacity=".7"/>
<g fill="#fcf4de"><rect x="362" y="737" width="248" height="1"/><rect x="362" y="754" width="248" height="1"/><rect x="362" y="772" width="248" height="1"/><rect x="362" y="790" width="248" height="1"/><rect x="486" y="615" width="1" height="197"/></g>
<!-- lane separators -->
<rect x="285" y="612" width="585" height="3" fill="#d6d6d2"/><rect x="285" y="612" width="585" height="1" fill="#aaa"/><rect x="285" y="614.500" width="585" height="1" fill="#aaa"/>
<rect x="285" y="729" width="585" height="4" fill="#d6d6d2"/><rect x="285" y="729" width="585" height="1" fill="#aaa"/><rect x="285" y="732" width="585" height="1" fill="#aaa"/>
<!-- clip border -->
<g fill="#000">
<rect x="361" y="582" width="250" height="3"/>
<rect x="361" y="582" width="2" height="30"/><rect x="608" y="582" width="3" height="30"/>
<rect x="361" y="615" width="2" height="114"/><rect x="608" y="615" width="3" height="114"/>
<rect x="361" y="733" width="2" height="79"/><rect x="608" y="733" width="3" height="79"/>
<rect x="361" y="809" width="250" height="3"/>
</g>
<!-- dashes -->
<rect x="361" y="607" width="15.500" height="2" fill="#d5a022"/>
<rect x="391.250" y="607" width="15.500" height="2" fill="#b88c18"/>
<rect x="422.500" y="607" width="15.500" height="2" fill="#b08414"/>
<rect x="453.750" y="607" width="15.500" height="2" fill="#9c7412"/>
<rect x="485" y="607" width="15.500" height="2" fill="#8a6410"/>
<rect x="516.250" y="607" width="15.500" height="2" fill="#745010"/>
<rect x="547.500" y="607" width="15.500" height="2" fill="#644210"/>
<rect x="578.750" y="607" width="15.500" height="2" fill="#5c2c10"/>

<!-- piano -->
<rect x="304" y="615" width="48" height="114" fill="#e8e8e4"/>
<rect x="304" y="615" width="1" height="114" fill="#000"/><rect x="351" y="615" width="1" height="114" fill="#000"/>
<g fill="#000"><rect x="304" y="626" width="47" height="1"/><rect x="304" y="636" width="47" height="1"/><rect x="304" y="647" width="47" height="1"/><rect x="304" y="661" width="47" height="1"/><rect x="304" y="672" width="47" height="1"/><rect x="304" y="683" width="47" height="1"/><rect x="304" y="696" width="47" height="1"/><rect x="304" y="710" width="47" height="1"/><rect x="304" y="721" width="47" height="1"/>
<rect x="304" y="624" width="27" height="6"/><rect x="304" y="645" width="27" height="6"/><rect x="304" y="659" width="27" height="6"/><rect x="304" y="680" width="27" height="6"/><rect x="304" y="694" width="27" height="6"/><rect x="304" y="708" width="27" height="6"/></g>
<text x="286" y="672" style="font-size:8px;fill:#70706c">C3</text>
<g style="font-size:8px" fill="#70706c"><text x="286" y="742">127</text><text x="286" y="757">96</text><text x="286" y="775">64</text><text x="286" y="793">32</text><text x="286" y="810">0</text></g>
<g fill="#a8a8a4"><rect x="342" y="737" width="10" height="1"/><rect x="342" y="754" width="10" height="1"/><rect x="342" y="772" width="10" height="1"/><rect x="342" y="790" width="10" height="1"/><rect x="342" y="809" width="10" height="1"/></g>

<!-- notes -->
<rect x="361.500" y="665.500" width="15" height="5.500" fill="#a8a68e"/>
<g stroke="#54301c" stroke-width="1">
<rect x="391.500" y="665.500" width="15" height="6" fill="#f7deae"/>
<rect x="423" y="665.500" width="15" height="6" fill="#f5b08a"/>
<rect x="454" y="665.500" width="15" height="6" fill="#f59470"/>
<rect x="485.500" y="665.500" width="15" height="6" fill="#f87a58"/>
<rect x="516.500" y="665.500" width="15" height="6" fill="#fa6a48"/>
<rect x="548" y="665.500" width="15" height="6" fill="#fc3a24"/>
<rect x="579" y="665.500" width="15" height="6" fill="#fd2810"/>
</g>
<g stroke="#54301c" stroke-width="1">
<rect x="361.500" y="805.500" width="4" height="4" fill="#a87c5c"/>
<rect x="391.500" y="794.500" width="4" height="15" fill="#f7deae"/>
<rect x="423" y="785.500" width="4" height="24" fill="#f5b08a"/>
<rect x="454" y="776.500" width="4" height="33" fill="#f59470"/>
<rect x="485.500" y="766.500" width="4" height="43" fill="#f87a58"/>
<rect x="516.500" y="757.500" width="4" height="52" fill="#fa6a48"/>
<rect x="548" y="747.500" width="4" height="62" fill="#fc3a24"/>
<rect x="579" y="738.500" width="4" height="71" fill="#fd2810"/>
</g>
<text x="362" y="746" style="font-size:12px;font-weight:bold;fill:#444458;letter-spacing:-.3px">Velocity</text>

<!-- handles -->
<polygon points="360,592 352,597 360,601" fill="#000" stroke="#fff" stroke-width=".8"/>
<polygon points="612,592 620,597 612,601" fill="#000" stroke="#fff" stroke-width=".8"/>
<polygon points="360,665 353,668 360,671" fill="#000" stroke="#fff" stroke-width=".8"/>
<polygon points="377,664 383,668 377,672" fill="#000" stroke="#fff" stroke-width=".8"/>

<!-- position lines -->
<rect x="360.500" y="519" width="1" height="293" fill="#777"/>
<rect x="374" y="530" width="2" height="282" fill="#777"/>
<rect x="361.500" y="508.500" width="15" height="10" fill="#e8e8e3" stroke="#333"/>
<text x="363" y="517" style="font-size:9px;font-weight:bold;fill:#333">L</text>
<path d="M369 510L373 513.500L369 517" stroke="#333" fill="none"/>
<text x="362" y="526" style="font-size:7.500px;fill:#a08a70">4</text>
<path d="M368.500 520H381V527L375 533L368.500 527Z" fill="#e4e4e0" stroke="#444"/>
<rect x="373" y="529" width="4" height="4" fill="#222"/>
</svg>
</body>
</html>
